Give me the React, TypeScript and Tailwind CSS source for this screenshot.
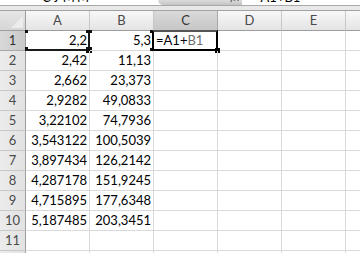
import React from "react";

const values: [string, string][] = [
  ["2,2", "5,3"],
  ["2,42", "11,13"],
  ["2,662", "23,373"],
  ["2,9282", "49,0833"],
  ["3,22102", "74,7936"],
  ["3,543122", "100,5039"],
  ["3,897434", "126,2142"],
  ["4,287178", "151,9245"],
  ["4,715895", "177,6348"],
  ["5,187485", "203,3451"],
  ["", ""],
  ["", ""],
];

const cols = ["A", "B", "C", "D", "E"];

const Handle = ({ className }: { className: string }) => (
  <span className={"absolute bg-[#111] " + className} />
);

const TopStrip = () => (
  <div className="flex flex-col">
    <div className="flex h-[5px] overflow-hidden">
      <div className="w-[158px] flex flex-col justify-end bg-white">
        <div className="h-[16px] leading-[16px] pl-[42px] text-[13px] text-black tracking-[2px]">СУММ</div>
      </div>
      <div className="w-[84px] flex flex-col justify-end bg-gradient-to-b from-[#dcdcdc] to-[#c4c4c4] rounded-bl-[7px]">
        <div className="h-[16px] leading-[16px] flex gap-[13px] pl-[26px] text-[12px] text-[#555]">
          <span>✕</span>
          <span>✓</span>
          <span className="italic">fx</span>
        </div>
      </div>
      <div className="flex-1 flex flex-col justify-end bg-white">
        <div className="h-[16px] leading-[16px] pl-[11px] text-[13px] text-black">=A1+B1</div>
      </div>
    </div>
    <div className="h-px bg-[#a9a9a9]" />
    <div className="h-[4px] bg-[#e8e8e8]" />
  </div>
);

const HeaderRow = () => (
  <div className="flex h-[21px] border-t border-[#a2a2a2]">
    <div className="w-[26px] relative border-r border-b border-[#9e9e9e] bg-gradient-to-b from-[#e6e6e6] to-[#d6d6d6]">
      <svg className="absolute right-[2px] bottom-[2px]" width="12" height="12" viewBox="0 0 12 12">
        <polygon points="12,0 12,12 0,12" fill="#ececec" />
      </svg>
    </div>
    {cols.map((c) => (
      <div
        key={c}
        className={
          "w-[64px] border-r border-b flex items-center justify-center text-[13px] " +
          (c === "C"
            ? "bg-gradient-to-b from-[#dadada] to-[#c6c6c6] border-r-[#a8a8a8] border-b-[#8f8f8f] text-[#333]"
            : "bg-gradient-to-b from-[#f8f8f8] to-[#e4e4e4] border-r-[#c8c8c8] border-b-[#9e9e9e] text-[#4a4a4a]")
        }
      >
        {c}
      </div>
    ))}
    <div className="flex-1 border-b border-[#9e9e9e] bg-gradient-to-b from-[#f8f8f8] to-[#e4e4e4]" />
  </div>
);

const BodyRow = ({ i, a, b }: { i: number; a: string; b: string }) => {
  const first = i === 1;
  return (
    <div className="flex h-[20px]">
      <div
        className={
          "w-[26px] border-r border-b border-r-[#9e9e9e] flex items-center justify-center text-[13px] " +
          (first
            ? "bg-gradient-to-r from-[#d8d8d8] to-[#c9c9c9] border-b-[#a8a8a8] text-[#333]"
            : "bg-gradient-to-r from-[#ececec] to-[#e2e2e2] border-b-[#c8c8c8] text-[#4a4a4a]")
        }
      >
        {i}
      </div>
      <div className="w-[64px] relative border-r border-b border-[#dadada] flex items-center justify-end pr-[2px] text-[13px] text-black">
        {a}
        {first && (
          <div className="absolute -left-px -top-px right-[-1px] bottom-[-1px] border-r-2 border-b-2 border-[#1a1a1a]">
            <Handle className="left-0 top-0 w-[3px] h-[3px]" />
            <Handle className="left-0 bottom-[-1px] w-[3px] h-[3px]" />
            <Handle className="right-[-4px] top-0 w-[6px] h-[3px]" />
            <Handle className="right-[-4px] bottom-[-4px] w-[6px] h-[6px]" />
          </div>
        )}
      </div>
      <div className="w-[64px] relative border-r border-b border-[#dadada] flex items-center justify-end pr-[2px] text-[13px] text-black">
        {b}
        {first && (
          <div className="absolute right-[-1px] -top-px bottom-[-1px] w-[2px] bg-[#3c3c3c]">
            <Handle className="right-0 top-0 w-[4px] h-[3px]" />
            <Handle className="right-0 bottom-0 w-[4px] h-[3px]" />
          </div>
        )}
      </div>
      <div className="w-[64px] relative border-r border-b border-[#dadada] flex items-center pl-[2px] text-[13px]">
        {first && (
          <>
            <span className="text-black">=A1+</span>
            <span className="text-[#6e6e6e]">B1</span>
            <div className="absolute left-[-2px] -top-px right-[-1px] bottom-[-1px] border-2 border-black border-t-[#555]">
              <Handle className="right-[-4px] bottom-[-4px] w-[5px] h-[5px] bg-black" />
            </div>
          </>
        )}
      </div>
      <div className="w-[64px] border-r border-b border-[#dadada]" />
      <div className="w-[64px] border-r border-b border-[#dadada]" />
      <div className="flex-1 border-b border-[#dadada]" />
    </div>
  );
};

export default function App() {
  return (
    <div className="w-[360px] h-[253px] overflow-hidden bg-white font-['Lato','Liberation_Sans',sans-serif] leading-none">
      <TopStrip />
      <HeaderRow />
      {values.map(([a, b], idx) => (
        <BodyRow key={idx} i={idx + 1} a={a} b={b} />
      ))}
    </div>
  );
}
